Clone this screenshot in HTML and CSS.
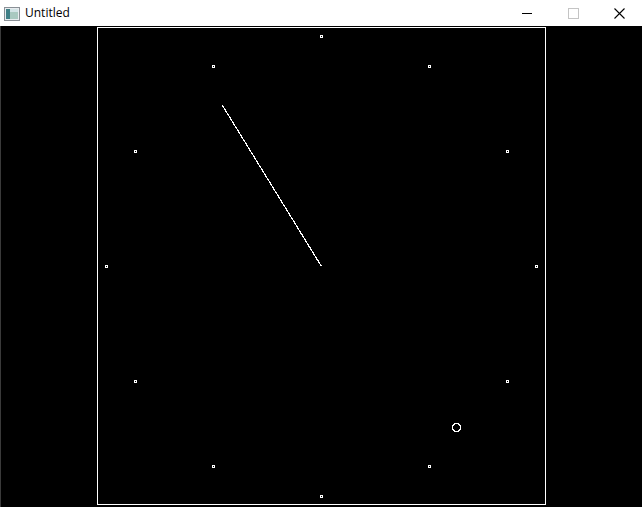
FILE: index.html
```html
<!DOCTYPE html>
<html>
<head>
<meta charset="utf-8">
<title>Untitled</title>
<link rel="stylesheet" href="styles.css">
</head>
<body>
<div class="window">
  <div class="titlebar">
    <svg class="app-icon" width="16" height="14" viewBox="0 0 16 14">
      <rect x="0.5" y="0.5" width="15" height="13" fill="#e8ecef" stroke="#8a9096"/>
      <rect x="2" y="2" width="4" height="10" fill="#3f7f86"/>
      <rect x="6" y="2" width="8" height="10" fill="#a9c9c0"/>
      <rect x="6" y="2" width="8" height="3" fill="#d3e4e6"/>
    </svg>
    <span class="title">Untitled</span>
    <div class="controls">
      <div class="ctl">
        <svg width="10" height="10" viewBox="0 0 10 10"><line x1="0" y1="5.5" x2="10" y2="5.5" stroke="#000" stroke-width="1"/></svg>
      </div>
      <div class="ctl">
        <svg width="11" height="11" viewBox="0 0 11 11"><rect x="0.5" y="0.5" width="10" height="10" fill="none" stroke="#c4c4c4"/></svg>
      </div>
      <div class="ctl">
        <svg width="11" height="11" viewBox="0 0 11 11"><path d="M0.5 0.5 L10.5 10.5 M10.5 0.5 L0.5 10.5" stroke="#000" stroke-width="1.1" fill="none"/></svg>
      </div>
    </div>
  </div>
  <div class="client">
    <svg class="canvas" width="642" height="481" viewBox="0 0 642 481" shape-rendering="crispEdges">
      <rect x="97.5" y="1.5" width="448" height="477" fill="none" stroke="#fff"/>
      <g fill="#fff">
        <rect x="320" y="9" width="3" height="3"/>
        <rect x="428" y="39" width="3" height="3"/>
        <rect x="506" y="124" width="3" height="3"/>
        <rect x="535" y="239" width="3" height="3"/>
        <rect x="506" y="354" width="3" height="3"/>
        <rect x="428" y="439" width="3" height="3"/>
        <rect x="320" y="469" width="3" height="3"/>
        <rect x="212" y="439" width="3" height="3"/>
        <rect x="134" y="354" width="3" height="3"/>
        <rect x="105" y="239" width="3" height="3"/>
        <rect x="134" y="124" width="3" height="3"/>
        <rect x="212" y="39" width="3" height="3"/>
      </g>
      <g fill="#000">
        <rect x="321" y="10" width="1" height="1"/>
        <rect x="429" y="40" width="1" height="1"/>
        <rect x="507" y="125" width="1" height="1"/>
        <rect x="536" y="240" width="1" height="1"/>
        <rect x="507" y="355" width="1" height="1"/>
        <rect x="429" y="440" width="1" height="1"/>
        <rect x="321" y="470" width="1" height="1"/>
        <rect x="213" y="440" width="1" height="1"/>
        <rect x="135" y="355" width="1" height="1"/>
        <rect x="106" y="240" width="1" height="1"/>
        <rect x="135" y="125" width="1" height="1"/>
        <rect x="213" y="40" width="1" height="1"/>
      </g>
      <line x1="321.5" y1="240.5" x2="222.5" y2="79.5" stroke="#fff" stroke-width="1.2"/>
      <circle cx="456.5" cy="401.5" r="4" fill="none" stroke="#fff" stroke-width="1.2"/>
    </svg>
  </div>
</div>
</body>
</html>
```

FILE: styles.css
```css
html, body {
  margin: 0;
  padding: 0;
  background: #000;
}
.window {
  width: 642px;
  height: 507px;
  display: flex;
  flex-direction: column;
  overflow: hidden;
}
.titlebar {
  height: 26px;
  background: #fff;
  display: flex;
  align-items: center;
  flex: none;
}
.app-icon {
  margin-left: 4px;
  margin-top: 1px;
}
.title {
  margin-left: 5px;
  font-family: "Open Sans", "Noto Sans", sans-serif;
  font-size: 12px;
  color: #000;
  line-height: 26px;
}
.controls {
  margin-left: auto;
  display: flex;
  height: 26px;
}
.ctl {
  width: 46px;
  height: 26px;
  display: flex;
  align-items: center;
  justify-content: center;
}
.ctl svg {
  display: block;
}
.client {
  flex: 1;
  background: #000;
  border-left: 1px solid #3a3a3a;
}
.canvas {
  display: block;
  margin-left: -1px;
}
```
